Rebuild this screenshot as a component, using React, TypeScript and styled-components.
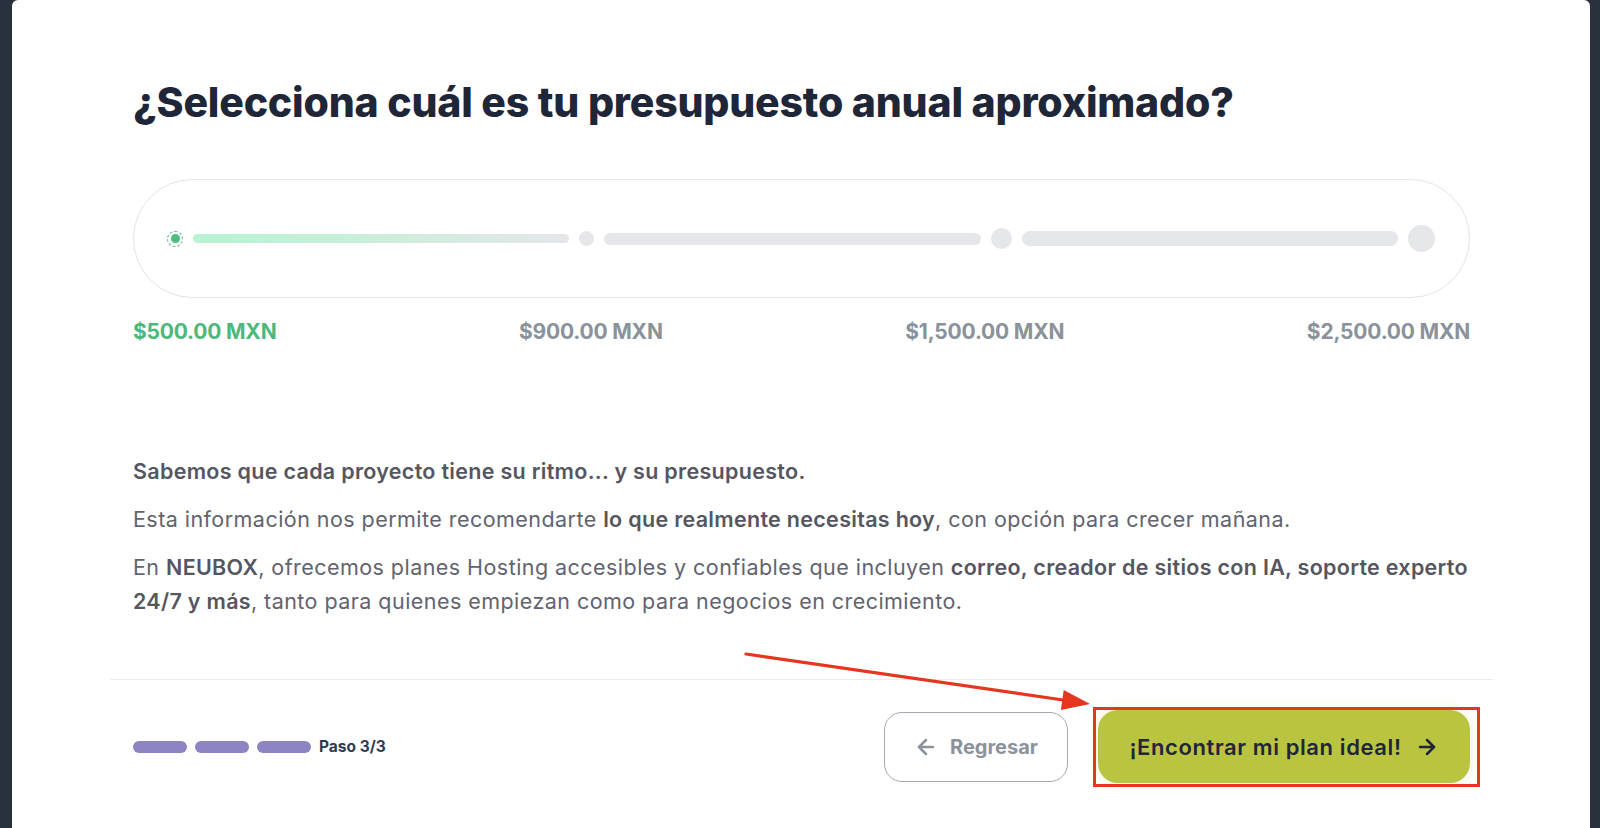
import React from "react";
import styled, { createGlobalStyle } from "styled-components";
import { ArrowLeft, ArrowRight } from "lucide-react";

const GlobalStyle = createGlobalStyle`
  html, body {
    margin: 0;
    padding: 0;
    background: #29313d;
    font-family: Inter, "Noto Sans", Arial, sans-serif;
  }
  * { box-sizing: border-box; }
`;

const Page = styled.div`
  height: 828px;
  padding: 0 10px 0 12px;
  overflow: hidden;
`;

const Card = styled.div`
  position: relative;
  background: #ffffff;
  height: 100%;
  border-radius: 6px 6px 0 0;
  display: flex;
  flex-direction: column;
  padding-top: 78px;
`;

const Content = styled.div`
  padding: 0 120px 0 121px;
`;

const Heading = styled.h1`
  margin: 0 0 53px;
  font-size: 41px;
  line-height: 48px;
  font-weight: 800;
  letter-spacing: -0.2px;
  color: #1e2638;
`;

const SliderBox = styled.div`
  height: 119px;
  border: 1px solid #e3e4e7;
  border-radius: 60px;
  display: flex;
  align-items: center;
  gap: 10px;
  padding: 0 34px 0 33px;
`;

const ActiveDot = styled.div`
  width: 16px;
  height: 16px;
  border-radius: 50%;
  border: 1.5px dashed #4fbd7f;
  display: flex;
  align-items: center;
  justify-content: center;
  flex: none;
  &::after {
    content: "";
    width: 9px;
    height: 9px;
    border-radius: 50%;
    background: #4fbd7f;
  }
`;

const Dot = styled.div<{ $size: number }>`
  width: ${(p) => p.$size}px;
  height: ${(p) => p.$size}px;
  border-radius: 50%;
  background: #e5e7eb;
  flex: none;
`;

const Segment = styled.div<{ $h: number; $active?: boolean }>`
  flex: 1;
  height: ${(p) => p.$h}px;
  border-radius: ${(p) => p.$h}px;
  background: ${(p) =>
    p.$active ? "linear-gradient(90deg, #b7f3d3 0%, #c9eed9 45%, #e5e7eb 100%)" : "#e5e7eb"};
`;

const Labels = styled.div`
  margin-top: 21px;
  display: flex;
  justify-content: space-between;
`;

const Label = styled.span<{ $active?: boolean }>`
  font-size: 21px;
  line-height: 26px;
  font-weight: 700;
  letter-spacing: -0.2px;
  color: ${(p) => (p.$active ? "#4cb97b" : "#8a929c")};
`;

const Copy = styled.div`
  margin-top: 109px;
  margin-right: -40px;
  display: flex;
  flex-direction: column;
  gap: 14px;
`;

const Para = styled.p`
  margin: 0;
  font-size: 21.5px;
  line-height: 34px;
  color: #62636f;
  letter-spacing: 0.45px;
`;

const Strong = styled.strong`
  font-weight: 600;
  color: #55565f;
  letter-spacing: 0.3px;
`;

const Divider = styled.hr`
  margin: 61px 97px 0 98px;
  border: none;
  border-top: 1px solid #ececee;
`;

const Footer = styled.div`
  margin: 30px 120px 0 121px;
  display: flex;
  align-items: center;
  justify-content: space-between;
`;

const Steps = styled.div`
  display: flex;
  align-items: center;
  gap: 8px;
`;

const StepBar = styled.div`
  width: 54px;
  height: 12px;
  border-radius: 6px;
  background: #8d84c3;
`;

const StepText = styled.span`
  font-size: 15.5px;
  font-weight: 700;
  color: #2f3b52;
`;

const Actions = styled.div`
  display: flex;
  align-items: center;
  gap: 30px;
`;

const BackButton = styled.button`
  width: 184px;
  height: 70px;
  border: 1px solid #a3a9b2;
  border-radius: 18px;
  background: #ffffff;
  display: flex;
  align-items: center;
  justify-content: center;
  gap: 12px;
  font-family: inherit;
  font-size: 20px;
  font-weight: 700;
  color: #8b929b;
  cursor: pointer;
`;

const Highlight = styled.div`
  position: relative;
`;

const HighlightBox = styled.div`
  position: absolute;
  inset: -3px -10px -4px -5px;
  border: 3px solid #e5361f;
  pointer-events: none;
`;

const PrimaryButton = styled.button`
  width: 372px;
  height: 73px;
  border: none;
  border-radius: 20px;
  background: #b9c540;
  box-shadow: 0 0 14px rgba(200, 210, 90, 0.3);
  display: flex;
  align-items: center;
  justify-content: center;
  gap: 13px;
  font-family: inherit;
  font-size: 22px;
  font-weight: 600;
  letter-spacing: 0.6px;
  color: #22253a;
  cursor: pointer;
`;

const ArrowOverlay = styled.svg`
  position: absolute;
  left: 720px;
  top: 640px;
  width: 380px;
  height: 80px;
  pointer-events: none;
  overflow: visible;
`;

export default function App() {
  return (
    <>
      <GlobalStyle />
      <Page>
        <Card>
          <Content>
            <Heading>¿Selecciona cuál es tu presupuesto anual aproximado?</Heading>
            <SliderBox>
              <ActiveDot />
              <Segment $h={9} $active />
              <Dot $size={15} />
              <Segment $h={12} />
              <Dot $size={21} />
              <Segment $h={15} />
              <Dot $size={27} />
            </SliderBox>
            <Labels>
              <Label $active>$500.00 MXN</Label>
              <Label>$900.00 MXN</Label>
              <Label>$1,500.00 MXN</Label>
              <Label>$2,500.00 MXN</Label>
            </Labels>
            <Copy>
              <Para>
                <Strong>Sabemos que cada proyecto tiene su ritmo... y su presupuesto.</Strong>
              </Para>
              <Para>
                Esta información nos permite recomendarte <Strong>lo que realmente necesitas hoy</Strong>, con
                opción para crecer mañana.
              </Para>
              <Para>
                En <Strong>NEUBOX</Strong>, ofrecemos planes Hosting accesibles y confiables que incluyen{" "}
                <Strong>correo, creador de sitios con IA, soporte experto</Strong>
                <br />
                <Strong>24/7 y más</Strong>, tanto para quienes empiezan como para negocios en crecimiento.
              </Para>
            </Copy>
          </Content>
          <Divider />
          <Footer>
            <Steps>
              <StepBar />
              <StepBar />
              <StepBar />
              <StepText>Paso 3/3</StepText>
            </Steps>
            <Actions>
              <BackButton>
                <ArrowLeft size={24} strokeWidth={2.5} />
                Regresar
              </BackButton>
              <Highlight>
                <PrimaryButton>
                  ¡Encontrar mi plan ideal!
                  <ArrowRight size={24} strokeWidth={2.5} />
                </PrimaryButton>
                <HighlightBox />
              </Highlight>
            </Actions>
          </Footer>
          <ArrowOverlay viewBox="0 0 380 80">
            <line x1="14" y1="14" x2="331" y2="60" stroke="#e5361f" strokeWidth="3.2" strokeLinecap="round" />
            <polygon points="358,64 331.7,50.1 328.9,69.9" fill="#e5361f" />
          </ArrowOverlay>
        </Card>
      </Page>
    </>
  );
}
